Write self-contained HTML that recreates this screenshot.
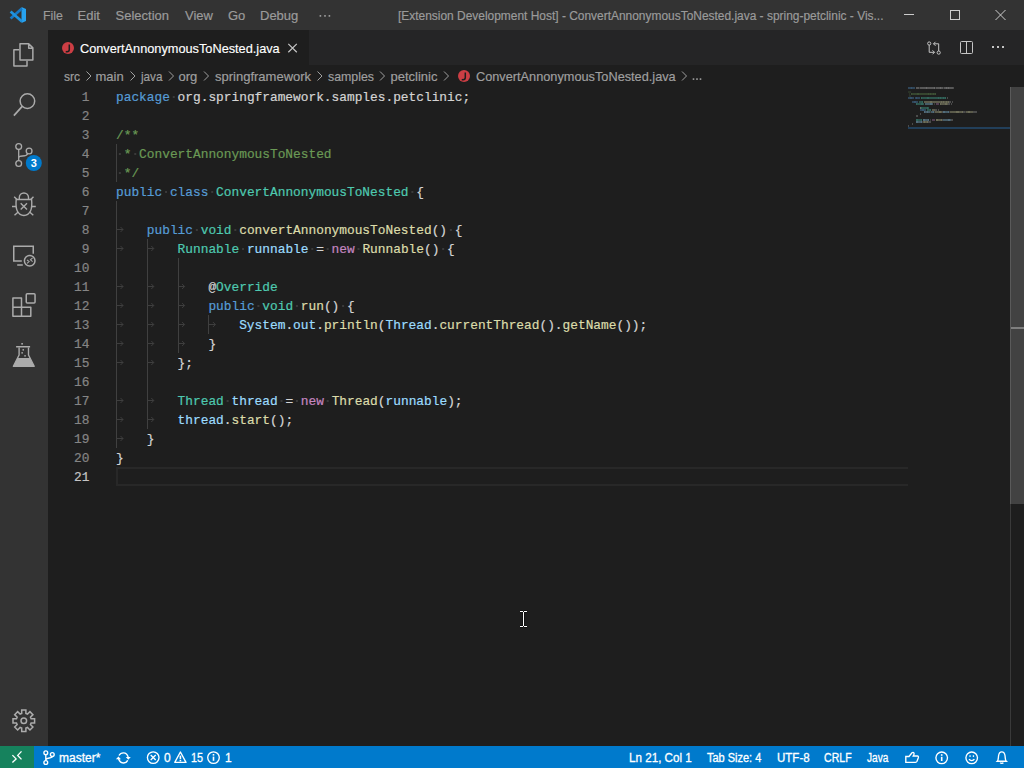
<!DOCTYPE html>
<html><head><meta charset="utf-8">
<style>
*{margin:0;padding:0;box-sizing:border-box}
html,body{width:1024px;height:768px;overflow:hidden;background:#1e1e1e;font-family:"Liberation Sans",sans-serif}
.abs{position:absolute}
#title{position:absolute;left:0;top:0;width:1024px;height:30px;background:#333333}
#act{position:absolute;left:0;top:30px;width:48px;height:716px;background:#333333}
#tabs{position:absolute;left:48px;top:30px;width:976px;height:35px;background:#252526}
#tab{position:absolute;left:48px;top:30px;width:261px;height:35px;background:#1e1e1e}
#status{position:absolute;left:0;top:746px;width:1024px;height:22px;background:#007acc}
#remote{position:absolute;left:0;top:746px;width:34px;height:22px;background:#16825d}
.t{position:absolute;white-space:pre;line-height:normal;-webkit-text-stroke:0.15px}
.menu{font-size:13px;color:#cccccc;opacity:.68;top:7.5px}
.ttl{font-size:12.5px;color:#cccccc;opacity:.68;top:8.5px;left:398px}
.bc{font-size:13px;color:#cccccc;opacity:.74;top:68.5px}
.sb{font-size:12px;color:#ffffff;top:751px;-webkit-text-stroke:0.3px}
.ln{position:absolute;left:116px;height:19px;white-space:pre;font-family:"Liberation Mono",monospace;font-size:12.83px;line-height:19px;padding-top:1px;-webkit-text-stroke:0.2px}
.num{position:absolute;left:59.5px;width:30px;text-align:right;height:19px;font-family:"Liberation Mono",monospace;font-size:12.83px;line-height:19px;padding-top:1px;color:#858585;-webkit-text-stroke:0.2px}
.num.act{color:#c6c6c6}
svg{position:absolute;left:0;top:0}
</style></head><body>
<div id="title"></div>
<div id="act"></div>
<div id="tabs"></div>
<div id="tab"></div>
<div id="status"></div>
<div id="remote"></div>

<!-- title bar text -->
<div class="t menu" style="left:42.5px;transform:scaleX(.95);transform-origin:0 0">File</div>
<div class="t menu" style="left:77.5px">Edit</div>
<div class="t menu" style="left:115.5px">Selection</div>
<div class="t menu" style="left:185px">View</div>
<div class="t menu" style="left:228px">Go</div>
<div class="t menu" style="left:260px">Debug</div>
<div class="t ttl" style="transform:scaleX(.955);transform-origin:0 0">[Extension Development Host] - ConvertAnnonymousToNested.java - spring-petclinic - Vis...</div>

<!-- tab -->
<div class="t" style="left:80px;top:41px;font-size:13px;color:#ffffff;transform:scaleX(.98);transform-origin:0 0">ConvertAnnonymousToNested.java</div>

<!-- breadcrumbs -->
<div class="t bc" style="left:64px;transform:scaleX(.93);transform-origin:0 0">src</div>
<div class="t bc" style="left:95.5px">main</div>
<div class="t bc" style="left:140.5px;transform:scaleX(.9);transform-origin:0 0">java</div>
<div class="t bc" style="left:178.5px">org</div>
<div class="t bc" style="left:215px">springframework</div>
<div class="t bc" style="left:328px;transform:scaleX(.95);transform-origin:0 0">samples</div>
<div class="t bc" style="left:390.5px">petclinic</div>
<div class="t bc" style="left:476px;transform:scaleX(.98);transform-origin:0 0">ConvertAnnonymousToNested.java</div>

<!-- editor -->
<div class="num" style="top:87px">1</div>
<div class="num" style="top:106px">2</div>
<div class="num" style="top:125px">3</div>
<div class="num" style="top:144px">4</div>
<div class="num" style="top:163px">5</div>
<div class="num" style="top:182px">6</div>
<div class="num" style="top:201px">7</div>
<div class="num" style="top:220px">8</div>
<div class="num" style="top:239px">9</div>
<div class="num" style="top:258px">10</div>
<div class="num" style="top:277px">11</div>
<div class="num" style="top:296px">12</div>
<div class="num" style="top:315px">13</div>
<div class="num" style="top:334px">14</div>
<div class="num" style="top:353px">15</div>
<div class="num" style="top:372px">16</div>
<div class="num" style="top:391px">17</div>
<div class="num" style="top:410px">18</div>
<div class="num" style="top:429px">19</div>
<div class="num" style="top:448px">20</div>
<div class="num act" style="top:467px">21</div>
<svg width="1024" height="768" style="pointer-events:none">
<path d="M908 468 H117 V485 H908" fill="none" stroke="#282828" stroke-width="2"/>
<g fill="#404040"><rect x="116" y="144" width="1" height="19"/><rect x="116" y="163" width="1" height="19"/><rect x="116" y="201" width="1" height="19"/><rect x="116" y="220" width="1" height="19"/><rect x="116" y="239" width="1" height="19"/><rect x="147" y="239" width="1" height="19"/><rect x="116" y="258" width="1" height="19"/><rect x="147" y="258" width="1" height="19"/><rect x="178" y="258" width="1" height="19"/><rect x="116" y="277" width="1" height="19"/><rect x="147" y="277" width="1" height="19"/><rect x="178" y="277" width="1" height="19"/><rect x="116" y="296" width="1" height="19"/><rect x="147" y="296" width="1" height="19"/><rect x="178" y="296" width="1" height="19"/><rect x="116" y="315" width="1" height="19"/><rect x="147" y="315" width="1" height="19"/><rect x="178" y="315" width="1" height="19"/><rect x="208" y="315" width="1" height="19"/><rect x="116" y="334" width="1" height="19"/><rect x="147" y="334" width="1" height="19"/><rect x="178" y="334" width="1" height="19"/><rect x="116" y="353" width="1" height="19"/><rect x="147" y="353" width="1" height="19"/><rect x="116" y="372" width="1" height="19"/><rect x="147" y="372" width="1" height="19"/><rect x="116" y="391" width="1" height="19"/><rect x="147" y="391" width="1" height="19"/><rect x="116" y="410" width="1" height="19"/><rect x="147" y="410" width="1" height="19"/><rect x="116" y="429" width="1" height="19"/></g>
<g fill="#3a3a3a"><rect x="172.73" y="96.00" width="2" height="2"/><rect x="118.85" y="153.00" width="2" height="2"/><rect x="134.25" y="153.00" width="2" height="2"/><rect x="118.85" y="172.00" width="2" height="2"/><rect x="165.04" y="191.00" width="2" height="2"/><rect x="211.22" y="191.00" width="2" height="2"/><rect x="411.37" y="191.00" width="2" height="2"/><rect x="195.83" y="229.00" width="2" height="2"/><rect x="234.32" y="229.00" width="2" height="2"/><rect x="449.86" y="229.00" width="2" height="2"/><rect x="242.02" y="248.00" width="2" height="2"/><rect x="311.30" y="248.00" width="2" height="2"/><rect x="326.69" y="248.00" width="2" height="2"/><rect x="357.49" y="248.00" width="2" height="2"/><rect x="442.17" y="248.00" width="2" height="2"/><rect x="257.41" y="305.00" width="2" height="2"/><rect x="295.90" y="305.00" width="2" height="2"/><rect x="342.09" y="305.00" width="2" height="2"/><rect x="226.62" y="400.00" width="2" height="2"/><rect x="280.51" y="400.00" width="2" height="2"/><rect x="295.90" y="400.00" width="2" height="2"/><rect x="326.69" y="400.00" width="2" height="2"/></g>
<g stroke="#3e3e3e" stroke-width="1" fill="none"><path d="M116.50 229.5H123.00M120.50 227L123.00 229.5L120.50 232"/><path d="M116.50 248.5H123.00M120.50 246L123.00 248.5L120.50 251"/><path d="M147.29 248.5H153.79M151.29 246L153.79 248.5L151.29 251"/><path d="M116.50 286.5H123.00M120.50 284L123.00 286.5L120.50 289"/><path d="M147.29 286.5H153.79M151.29 284L153.79 286.5L151.29 289"/><path d="M178.08 286.5H184.58M182.08 284L184.58 286.5L182.08 289"/><path d="M116.50 305.5H123.00M120.50 303L123.00 305.5L120.50 308"/><path d="M147.29 305.5H153.79M151.29 303L153.79 305.5L151.29 308"/><path d="M178.08 305.5H184.58M182.08 303L184.58 305.5L182.08 308"/><path d="M116.50 324.5H123.00M120.50 322L123.00 324.5L120.50 327"/><path d="M147.29 324.5H153.79M151.29 322L153.79 324.5L151.29 327"/><path d="M178.08 324.5H184.58M182.08 322L184.58 324.5L182.08 327"/><path d="M208.88 324.5H215.38M212.88 322L215.38 324.5L212.88 327"/><path d="M116.50 343.5H123.00M120.50 341L123.00 343.5L120.50 346"/><path d="M147.29 343.5H153.79M151.29 341L153.79 343.5L151.29 346"/><path d="M178.08 343.5H184.58M182.08 341L184.58 343.5L182.08 346"/><path d="M116.50 362.5H123.00M120.50 360L123.00 362.5L120.50 365"/><path d="M147.29 362.5H153.79M151.29 360L153.79 362.5L151.29 365"/><path d="M116.50 400.5H123.00M120.50 398L123.00 400.5L120.50 403"/><path d="M147.29 400.5H153.79M151.29 398L153.79 400.5L151.29 403"/><path d="M116.50 419.5H123.00M120.50 417L123.00 419.5L120.50 422"/><path d="M147.29 419.5H153.79M151.29 417L153.79 419.5L151.29 422"/><path d="M116.50 438.5H123.00M120.50 436L123.00 438.5L120.50 441"/></g>
</svg>
<div class="ln" style="top:87px"><span style="color:#569CD6">package</span> <span style="color:#D4D4D4">org.springframework.samples.petclinic;</span></div>
<div class="ln" style="top:106px"></div>
<div class="ln" style="top:125px"><span style="color:#6A9955">/**</span></div>
<div class="ln" style="top:144px"> <span style="color:#6A9955">*</span> <span style="color:#6A9955">ConvertAnnonymousToNested</span></div>
<div class="ln" style="top:163px"> <span style="color:#6A9955">*/</span></div>
<div class="ln" style="top:182px"><span style="color:#569CD6">public</span> <span style="color:#569CD6">class</span> <span style="color:#4EC9B0">ConvertAnnonymousToNested</span> <span style="color:#D4D4D4">{</span></div>
<div class="ln" style="top:201px"></div>
<div class="ln" style="top:220px">    <span style="color:#569CD6">public</span> <span style="color:#4EC9B0">void</span> <span style="color:#DCDCAA">convertAnnonymousToNested</span><span style="color:#D4D4D4">()</span> <span style="color:#D4D4D4">{</span></div>
<div class="ln" style="top:239px">        <span style="color:#4EC9B0">Runnable</span> <span style="color:#9CDCFE">runnable</span> <span style="color:#D4D4D4">=</span> <span style="color:#C586C0">new</span> <span style="color:#DCDCAA">Runnable</span><span style="color:#D4D4D4">()</span> <span style="color:#D4D4D4">{</span></div>
<div class="ln" style="top:258px"></div>
<div class="ln" style="top:277px">            <span style="color:#D4D4D4">@</span><span style="color:#4EC9B0">Override</span></div>
<div class="ln" style="top:296px">            <span style="color:#569CD6">public</span> <span style="color:#4EC9B0">void</span> <span style="color:#DCDCAA">run</span><span style="color:#D4D4D4">()</span> <span style="color:#D4D4D4">{</span></div>
<div class="ln" style="top:315px">                <span style="color:#9CDCFE">System</span><span style="color:#D4D4D4">.</span><span style="color:#9CDCFE">out</span><span style="color:#D4D4D4">.</span><span style="color:#DCDCAA">println</span><span style="color:#D4D4D4">(</span><span style="color:#9CDCFE">Thread</span><span style="color:#D4D4D4">.</span><span style="color:#DCDCAA">currentThread</span><span style="color:#D4D4D4">().</span><span style="color:#DCDCAA">getName</span><span style="color:#D4D4D4">());</span></div>
<div class="ln" style="top:334px">            <span style="color:#D4D4D4">}</span></div>
<div class="ln" style="top:353px">        <span style="color:#D4D4D4">};</span></div>
<div class="ln" style="top:372px"></div>
<div class="ln" style="top:391px">        <span style="color:#4EC9B0">Thread</span> <span style="color:#9CDCFE">thread</span> <span style="color:#D4D4D4">=</span> <span style="color:#C586C0">new</span> <span style="color:#DCDCAA">Thread</span><span style="color:#D4D4D4">(</span><span style="color:#9CDCFE">runnable</span><span style="color:#D4D4D4">);</span></div>
<div class="ln" style="top:410px">        <span style="color:#9CDCFE">thread</span><span style="color:#D4D4D4">.</span><span style="color:#DCDCAA">start</span><span style="color:#D4D4D4">();</span></div>
<div class="ln" style="top:429px">    <span style="color:#D4D4D4">}</span></div>
<div class="ln" style="top:448px"><span style="color:#D4D4D4">}</span></div>
<div class="ln" style="top:467px"></div>

<!-- minimap + scrollbar -->
<svg width="1024" height="768" style="pointer-events:none">
<g><rect x="908" y="87" width="1" height="2" fill="#569CD6" fill-opacity="0.32"/><rect x="909" y="87" width="1" height="2" fill="#569CD6" fill-opacity="0.32"/><rect x="910" y="87" width="1" height="2" fill="#569CD6" fill-opacity="0.32"/><rect x="911" y="87" width="1" height="2" fill="#569CD6" fill-opacity="0.42"/><rect x="912" y="87" width="1" height="2" fill="#569CD6" fill-opacity="0.32"/><rect x="913" y="87" width="1" height="2" fill="#569CD6" fill-opacity="0.32"/><rect x="914" y="87" width="1" height="2" fill="#569CD6" fill-opacity="0.32"/><rect x="916" y="87" width="1" height="2" fill="#D4D4D4" fill-opacity="0.32"/><rect x="917" y="87" width="1" height="2" fill="#D4D4D4" fill-opacity="0.32"/><rect x="918" y="87" width="1" height="2" fill="#D4D4D4" fill-opacity="0.32"/><rect x="919" y="87" width="1" height="2" fill="#D4D4D4" fill-opacity="0.16"/><rect x="920" y="87" width="1" height="2" fill="#D4D4D4" fill-opacity="0.32"/><rect x="921" y="87" width="1" height="2" fill="#D4D4D4" fill-opacity="0.32"/><rect x="922" y="87" width="1" height="2" fill="#D4D4D4" fill-opacity="0.32"/><rect x="923" y="87" width="1" height="2" fill="#D4D4D4" fill-opacity="0.32"/><rect x="924" y="87" width="1" height="2" fill="#D4D4D4" fill-opacity="0.32"/><rect x="925" y="87" width="1" height="2" fill="#D4D4D4" fill-opacity="0.32"/><rect x="926" y="87" width="1" height="2" fill="#D4D4D4" fill-opacity="0.42"/><rect x="927" y="87" width="1" height="2" fill="#D4D4D4" fill-opacity="0.32"/><rect x="928" y="87" width="1" height="2" fill="#D4D4D4" fill-opacity="0.32"/><rect x="929" y="87" width="1" height="2" fill="#D4D4D4" fill-opacity="0.32"/><rect x="930" y="87" width="1" height="2" fill="#D4D4D4" fill-opacity="0.32"/><rect x="931" y="87" width="1" height="2" fill="#D4D4D4" fill-opacity="0.32"/><rect x="932" y="87" width="1" height="2" fill="#D4D4D4" fill-opacity="0.32"/><rect x="933" y="87" width="1" height="2" fill="#D4D4D4" fill-opacity="0.32"/><rect x="934" y="87" width="1" height="2" fill="#D4D4D4" fill-opacity="0.42"/><rect x="935" y="87" width="1" height="2" fill="#D4D4D4" fill-opacity="0.16"/><rect x="936" y="87" width="1" height="2" fill="#D4D4D4" fill-opacity="0.32"/><rect x="937" y="87" width="1" height="2" fill="#D4D4D4" fill-opacity="0.32"/><rect x="938" y="87" width="1" height="2" fill="#D4D4D4" fill-opacity="0.32"/><rect x="939" y="87" width="1" height="2" fill="#D4D4D4" fill-opacity="0.32"/><rect x="940" y="87" width="1" height="2" fill="#D4D4D4" fill-opacity="0.42"/><rect x="941" y="87" width="1" height="2" fill="#D4D4D4" fill-opacity="0.32"/><rect x="942" y="87" width="1" height="2" fill="#D4D4D4" fill-opacity="0.32"/><rect x="943" y="87" width="1" height="2" fill="#D4D4D4" fill-opacity="0.16"/><rect x="944" y="87" width="1" height="2" fill="#D4D4D4" fill-opacity="0.32"/><rect x="945" y="87" width="1" height="2" fill="#D4D4D4" fill-opacity="0.32"/><rect x="946" y="87" width="1" height="2" fill="#D4D4D4" fill-opacity="0.42"/><rect x="947" y="87" width="1" height="2" fill="#D4D4D4" fill-opacity="0.32"/><rect x="948" y="87" width="1" height="2" fill="#D4D4D4" fill-opacity="0.42"/><rect x="949" y="87" width="1" height="2" fill="#D4D4D4" fill-opacity="0.32"/><rect x="950" y="87" width="1" height="2" fill="#D4D4D4" fill-opacity="0.32"/><rect x="951" y="87" width="1" height="2" fill="#D4D4D4" fill-opacity="0.32"/><rect x="952" y="87" width="1" height="2" fill="#D4D4D4" fill-opacity="0.32"/><rect x="953" y="87" width="1" height="2" fill="#D4D4D4" fill-opacity="0.25"/><rect x="908" y="91" width="1" height="2" fill="#6A9955" fill-opacity="0.16"/><rect x="909" y="91" width="1" height="2" fill="#6A9955" fill-opacity="0.16"/><rect x="910" y="91" width="1" height="2" fill="#6A9955" fill-opacity="0.16"/><rect x="909" y="93" width="1" height="2" fill="#6A9955" fill-opacity="0.16"/><rect x="911" y="93" width="1" height="2" fill="#6A9955" fill-opacity="0.42"/><rect x="912" y="93" width="1" height="2" fill="#6A9955" fill-opacity="0.32"/><rect x="913" y="93" width="1" height="2" fill="#6A9955" fill-opacity="0.32"/><rect x="914" y="93" width="1" height="2" fill="#6A9955" fill-opacity="0.32"/><rect x="915" y="93" width="1" height="2" fill="#6A9955" fill-opacity="0.32"/><rect x="916" y="93" width="1" height="2" fill="#6A9955" fill-opacity="0.32"/><rect x="917" y="93" width="1" height="2" fill="#6A9955" fill-opacity="0.42"/><rect x="918" y="93" width="1" height="2" fill="#6A9955" fill-opacity="0.42"/><rect x="919" y="93" width="1" height="2" fill="#6A9955" fill-opacity="0.32"/><rect x="920" y="93" width="1" height="2" fill="#6A9955" fill-opacity="0.32"/><rect x="921" y="93" width="1" height="2" fill="#6A9955" fill-opacity="0.32"/><rect x="922" y="93" width="1" height="2" fill="#6A9955" fill-opacity="0.32"/><rect x="923" y="93" width="1" height="2" fill="#6A9955" fill-opacity="0.32"/><rect x="924" y="93" width="1" height="2" fill="#6A9955" fill-opacity="0.32"/><rect x="925" y="93" width="1" height="2" fill="#6A9955" fill-opacity="0.32"/><rect x="926" y="93" width="1" height="2" fill="#6A9955" fill-opacity="0.32"/><rect x="927" y="93" width="1" height="2" fill="#6A9955" fill-opacity="0.32"/><rect x="928" y="93" width="1" height="2" fill="#6A9955" fill-opacity="0.42"/><rect x="929" y="93" width="1" height="2" fill="#6A9955" fill-opacity="0.32"/><rect x="930" y="93" width="1" height="2" fill="#6A9955" fill-opacity="0.42"/><rect x="931" y="93" width="1" height="2" fill="#6A9955" fill-opacity="0.32"/><rect x="932" y="93" width="1" height="2" fill="#6A9955" fill-opacity="0.32"/><rect x="933" y="93" width="1" height="2" fill="#6A9955" fill-opacity="0.42"/><rect x="934" y="93" width="1" height="2" fill="#6A9955" fill-opacity="0.32"/><rect x="935" y="93" width="1" height="2" fill="#6A9955" fill-opacity="0.42"/><rect x="909" y="95" width="1" height="2" fill="#6A9955" fill-opacity="0.16"/><rect x="910" y="95" width="1" height="2" fill="#6A9955" fill-opacity="0.16"/><rect x="908" y="97" width="1" height="2" fill="#569CD6" fill-opacity="0.32"/><rect x="909" y="97" width="1" height="2" fill="#569CD6" fill-opacity="0.32"/><rect x="910" y="97" width="1" height="2" fill="#569CD6" fill-opacity="0.42"/><rect x="911" y="97" width="1" height="2" fill="#569CD6" fill-opacity="0.42"/><rect x="912" y="97" width="1" height="2" fill="#569CD6" fill-opacity="0.32"/><rect x="913" y="97" width="1" height="2" fill="#569CD6" fill-opacity="0.32"/><rect x="915" y="97" width="1" height="2" fill="#569CD6" fill-opacity="0.32"/><rect x="916" y="97" width="1" height="2" fill="#569CD6" fill-opacity="0.42"/><rect x="917" y="97" width="1" height="2" fill="#569CD6" fill-opacity="0.32"/><rect x="918" y="97" width="1" height="2" fill="#569CD6" fill-opacity="0.32"/><rect x="919" y="97" width="1" height="2" fill="#569CD6" fill-opacity="0.32"/><rect x="921" y="97" width="1" height="2" fill="#4EC9B0" fill-opacity="0.42"/><rect x="922" y="97" width="1" height="2" fill="#4EC9B0" fill-opacity="0.32"/><rect x="923" y="97" width="1" height="2" fill="#4EC9B0" fill-opacity="0.32"/><rect x="924" y="97" width="1" height="2" fill="#4EC9B0" fill-opacity="0.32"/><rect x="925" y="97" width="1" height="2" fill="#4EC9B0" fill-opacity="0.32"/><rect x="926" y="97" width="1" height="2" fill="#4EC9B0" fill-opacity="0.32"/><rect x="927" y="97" width="1" height="2" fill="#4EC9B0" fill-opacity="0.42"/><rect x="928" y="97" width="1" height="2" fill="#4EC9B0" fill-opacity="0.42"/><rect x="929" y="97" width="1" height="2" fill="#4EC9B0" fill-opacity="0.32"/><rect x="930" y="97" width="1" height="2" fill="#4EC9B0" fill-opacity="0.32"/><rect x="931" y="97" width="1" height="2" fill="#4EC9B0" fill-opacity="0.32"/><rect x="932" y="97" width="1" height="2" fill="#4EC9B0" fill-opacity="0.32"/><rect x="933" y="97" width="1" height="2" fill="#4EC9B0" fill-opacity="0.32"/><rect x="934" y="97" width="1" height="2" fill="#4EC9B0" fill-opacity="0.32"/><rect x="935" y="97" width="1" height="2" fill="#4EC9B0" fill-opacity="0.32"/><rect x="936" y="97" width="1" height="2" fill="#4EC9B0" fill-opacity="0.32"/><rect x="937" y="97" width="1" height="2" fill="#4EC9B0" fill-opacity="0.32"/><rect x="938" y="97" width="1" height="2" fill="#4EC9B0" fill-opacity="0.42"/><rect x="939" y="97" width="1" height="2" fill="#4EC9B0" fill-opacity="0.32"/><rect x="940" y="97" width="1" height="2" fill="#4EC9B0" fill-opacity="0.42"/><rect x="941" y="97" width="1" height="2" fill="#4EC9B0" fill-opacity="0.32"/><rect x="942" y="97" width="1" height="2" fill="#4EC9B0" fill-opacity="0.32"/><rect x="943" y="97" width="1" height="2" fill="#4EC9B0" fill-opacity="0.42"/><rect x="944" y="97" width="1" height="2" fill="#4EC9B0" fill-opacity="0.32"/><rect x="945" y="97" width="1" height="2" fill="#4EC9B0" fill-opacity="0.42"/><rect x="947" y="97" width="1" height="2" fill="#D4D4D4" fill-opacity="0.25"/><rect x="912" y="101" width="1" height="2" fill="#569CD6" fill-opacity="0.32"/><rect x="913" y="101" width="1" height="2" fill="#569CD6" fill-opacity="0.32"/><rect x="914" y="101" width="1" height="2" fill="#569CD6" fill-opacity="0.42"/><rect x="915" y="101" width="1" height="2" fill="#569CD6" fill-opacity="0.42"/><rect x="916" y="101" width="1" height="2" fill="#569CD6" fill-opacity="0.32"/><rect x="917" y="101" width="1" height="2" fill="#569CD6" fill-opacity="0.32"/><rect x="919" y="101" width="1" height="2" fill="#4EC9B0" fill-opacity="0.32"/><rect x="920" y="101" width="1" height="2" fill="#4EC9B0" fill-opacity="0.32"/><rect x="921" y="101" width="1" height="2" fill="#4EC9B0" fill-opacity="0.32"/><rect x="922" y="101" width="1" height="2" fill="#4EC9B0" fill-opacity="0.42"/><rect x="924" y="101" width="1" height="2" fill="#DCDCAA" fill-opacity="0.32"/><rect x="925" y="101" width="1" height="2" fill="#DCDCAA" fill-opacity="0.32"/><rect x="926" y="101" width="1" height="2" fill="#DCDCAA" fill-opacity="0.32"/><rect x="927" y="101" width="1" height="2" fill="#DCDCAA" fill-opacity="0.32"/><rect x="928" y="101" width="1" height="2" fill="#DCDCAA" fill-opacity="0.32"/><rect x="929" y="101" width="1" height="2" fill="#DCDCAA" fill-opacity="0.32"/><rect x="930" y="101" width="1" height="2" fill="#DCDCAA" fill-opacity="0.42"/><rect x="931" y="101" width="1" height="2" fill="#DCDCAA" fill-opacity="0.42"/><rect x="932" y="101" width="1" height="2" fill="#DCDCAA" fill-opacity="0.32"/><rect x="933" y="101" width="1" height="2" fill="#DCDCAA" fill-opacity="0.32"/><rect x="934" y="101" width="1" height="2" fill="#DCDCAA" fill-opacity="0.32"/><rect x="935" y="101" width="1" height="2" fill="#DCDCAA" fill-opacity="0.32"/><rect x="936" y="101" width="1" height="2" fill="#DCDCAA" fill-opacity="0.32"/><rect x="937" y="101" width="1" height="2" fill="#DCDCAA" fill-opacity="0.32"/><rect x="938" y="101" width="1" height="2" fill="#DCDCAA" fill-opacity="0.32"/><rect x="939" y="101" width="1" height="2" fill="#DCDCAA" fill-opacity="0.32"/><rect x="940" y="101" width="1" height="2" fill="#DCDCAA" fill-opacity="0.32"/><rect x="941" y="101" width="1" height="2" fill="#DCDCAA" fill-opacity="0.42"/><rect x="942" y="101" width="1" height="2" fill="#DCDCAA" fill-opacity="0.32"/><rect x="943" y="101" width="1" height="2" fill="#DCDCAA" fill-opacity="0.42"/><rect x="944" y="101" width="1" height="2" fill="#DCDCAA" fill-opacity="0.32"/><rect x="945" y="101" width="1" height="2" fill="#DCDCAA" fill-opacity="0.32"/><rect x="946" y="101" width="1" height="2" fill="#DCDCAA" fill-opacity="0.42"/><rect x="947" y="101" width="1" height="2" fill="#DCDCAA" fill-opacity="0.32"/><rect x="948" y="101" width="1" height="2" fill="#DCDCAA" fill-opacity="0.42"/><rect x="949" y="101" width="1" height="2" fill="#D4D4D4" fill-opacity="0.25"/><rect x="950" y="101" width="1" height="2" fill="#D4D4D4" fill-opacity="0.25"/><rect x="952" y="101" width="1" height="2" fill="#D4D4D4" fill-opacity="0.25"/><rect x="916" y="103" width="1" height="2" fill="#4EC9B0" fill-opacity="0.42"/><rect x="917" y="103" width="1" height="2" fill="#4EC9B0" fill-opacity="0.32"/><rect x="918" y="103" width="1" height="2" fill="#4EC9B0" fill-opacity="0.32"/><rect x="919" y="103" width="1" height="2" fill="#4EC9B0" fill-opacity="0.32"/><rect x="920" y="103" width="1" height="2" fill="#4EC9B0" fill-opacity="0.32"/><rect x="921" y="103" width="1" height="2" fill="#4EC9B0" fill-opacity="0.42"/><rect x="922" y="103" width="1" height="2" fill="#4EC9B0" fill-opacity="0.42"/><rect x="923" y="103" width="1" height="2" fill="#4EC9B0" fill-opacity="0.32"/><rect x="925" y="103" width="1" height="2" fill="#9CDCFE" fill-opacity="0.32"/><rect x="926" y="103" width="1" height="2" fill="#9CDCFE" fill-opacity="0.32"/><rect x="927" y="103" width="1" height="2" fill="#9CDCFE" fill-opacity="0.32"/><rect x="928" y="103" width="1" height="2" fill="#9CDCFE" fill-opacity="0.32"/><rect x="929" y="103" width="1" height="2" fill="#9CDCFE" fill-opacity="0.32"/><rect x="930" y="103" width="1" height="2" fill="#9CDCFE" fill-opacity="0.42"/><rect x="931" y="103" width="1" height="2" fill="#9CDCFE" fill-opacity="0.42"/><rect x="932" y="103" width="1" height="2" fill="#9CDCFE" fill-opacity="0.32"/><rect x="934" y="103" width="1" height="2" fill="#D4D4D4" fill-opacity="0.16"/><rect x="936" y="103" width="1" height="2" fill="#C586C0" fill-opacity="0.32"/><rect x="937" y="103" width="1" height="2" fill="#C586C0" fill-opacity="0.32"/><rect x="938" y="103" width="1" height="2" fill="#C586C0" fill-opacity="0.32"/><rect x="940" y="103" width="1" height="2" fill="#DCDCAA" fill-opacity="0.42"/><rect x="941" y="103" width="1" height="2" fill="#DCDCAA" fill-opacity="0.32"/><rect x="942" y="103" width="1" height="2" fill="#DCDCAA" fill-opacity="0.32"/><rect x="943" y="103" width="1" height="2" fill="#DCDCAA" fill-opacity="0.32"/><rect x="944" y="103" width="1" height="2" fill="#DCDCAA" fill-opacity="0.32"/><rect x="945" y="103" width="1" height="2" fill="#DCDCAA" fill-opacity="0.42"/><rect x="946" y="103" width="1" height="2" fill="#DCDCAA" fill-opacity="0.42"/><rect x="947" y="103" width="1" height="2" fill="#DCDCAA" fill-opacity="0.32"/><rect x="948" y="103" width="1" height="2" fill="#D4D4D4" fill-opacity="0.25"/><rect x="949" y="103" width="1" height="2" fill="#D4D4D4" fill-opacity="0.25"/><rect x="951" y="103" width="1" height="2" fill="#D4D4D4" fill-opacity="0.25"/><rect x="920" y="107" width="1" height="2" fill="#D4D4D4" fill-opacity="0.42"/><rect x="921" y="107" width="1" height="2" fill="#4EC9B0" fill-opacity="0.42"/><rect x="922" y="107" width="1" height="2" fill="#4EC9B0" fill-opacity="0.32"/><rect x="923" y="107" width="1" height="2" fill="#4EC9B0" fill-opacity="0.32"/><rect x="924" y="107" width="1" height="2" fill="#4EC9B0" fill-opacity="0.32"/><rect x="925" y="107" width="1" height="2" fill="#4EC9B0" fill-opacity="0.32"/><rect x="926" y="107" width="1" height="2" fill="#4EC9B0" fill-opacity="0.32"/><rect x="927" y="107" width="1" height="2" fill="#4EC9B0" fill-opacity="0.42"/><rect x="928" y="107" width="1" height="2" fill="#4EC9B0" fill-opacity="0.32"/><rect x="920" y="109" width="1" height="2" fill="#569CD6" fill-opacity="0.32"/><rect x="921" y="109" width="1" height="2" fill="#569CD6" fill-opacity="0.32"/><rect x="922" y="109" width="1" height="2" fill="#569CD6" fill-opacity="0.42"/><rect x="923" y="109" width="1" height="2" fill="#569CD6" fill-opacity="0.42"/><rect x="924" y="109" width="1" height="2" fill="#569CD6" fill-opacity="0.32"/><rect x="925" y="109" width="1" height="2" fill="#569CD6" fill-opacity="0.32"/><rect x="927" y="109" width="1" height="2" fill="#4EC9B0" fill-opacity="0.32"/><rect x="928" y="109" width="1" height="2" fill="#4EC9B0" fill-opacity="0.32"/><rect x="929" y="109" width="1" height="2" fill="#4EC9B0" fill-opacity="0.32"/><rect x="930" y="109" width="1" height="2" fill="#4EC9B0" fill-opacity="0.42"/><rect x="932" y="109" width="1" height="2" fill="#DCDCAA" fill-opacity="0.32"/><rect x="933" y="109" width="1" height="2" fill="#DCDCAA" fill-opacity="0.32"/><rect x="934" y="109" width="1" height="2" fill="#DCDCAA" fill-opacity="0.32"/><rect x="935" y="109" width="1" height="2" fill="#D4D4D4" fill-opacity="0.25"/><rect x="936" y="109" width="1" height="2" fill="#D4D4D4" fill-opacity="0.25"/><rect x="938" y="109" width="1" height="2" fill="#D4D4D4" fill-opacity="0.25"/><rect x="924" y="111" width="1" height="2" fill="#9CDCFE" fill-opacity="0.42"/><rect x="925" y="111" width="1" height="2" fill="#9CDCFE" fill-opacity="0.32"/><rect x="926" y="111" width="1" height="2" fill="#9CDCFE" fill-opacity="0.32"/><rect x="927" y="111" width="1" height="2" fill="#9CDCFE" fill-opacity="0.42"/><rect x="928" y="111" width="1" height="2" fill="#9CDCFE" fill-opacity="0.32"/><rect x="929" y="111" width="1" height="2" fill="#9CDCFE" fill-opacity="0.32"/><rect x="930" y="111" width="1" height="2" fill="#D4D4D4" fill-opacity="0.16"/><rect x="931" y="111" width="1" height="2" fill="#9CDCFE" fill-opacity="0.32"/><rect x="932" y="111" width="1" height="2" fill="#9CDCFE" fill-opacity="0.32"/><rect x="933" y="111" width="1" height="2" fill="#9CDCFE" fill-opacity="0.42"/><rect x="934" y="111" width="1" height="2" fill="#D4D4D4" fill-opacity="0.16"/><rect x="935" y="111" width="1" height="2" fill="#DCDCAA" fill-opacity="0.32"/><rect x="936" y="111" width="1" height="2" fill="#DCDCAA" fill-opacity="0.32"/><rect x="937" y="111" width="1" height="2" fill="#DCDCAA" fill-opacity="0.32"/><rect x="938" y="111" width="1" height="2" fill="#DCDCAA" fill-opacity="0.32"/><rect x="939" y="111" width="1" height="2" fill="#DCDCAA" fill-opacity="0.42"/><rect x="940" y="111" width="1" height="2" fill="#DCDCAA" fill-opacity="0.42"/><rect x="941" y="111" width="1" height="2" fill="#DCDCAA" fill-opacity="0.32"/><rect x="942" y="111" width="1" height="2" fill="#D4D4D4" fill-opacity="0.25"/><rect x="943" y="111" width="1" height="2" fill="#9CDCFE" fill-opacity="0.42"/><rect x="944" y="111" width="1" height="2" fill="#9CDCFE" fill-opacity="0.42"/><rect x="945" y="111" width="1" height="2" fill="#9CDCFE" fill-opacity="0.32"/><rect x="946" y="111" width="1" height="2" fill="#9CDCFE" fill-opacity="0.32"/><rect x="947" y="111" width="1" height="2" fill="#9CDCFE" fill-opacity="0.32"/><rect x="948" y="111" width="1" height="2" fill="#9CDCFE" fill-opacity="0.42"/><rect x="949" y="111" width="1" height="2" fill="#D4D4D4" fill-opacity="0.16"/><rect x="950" y="111" width="1" height="2" fill="#DCDCAA" fill-opacity="0.32"/><rect x="951" y="111" width="1" height="2" fill="#DCDCAA" fill-opacity="0.32"/><rect x="952" y="111" width="1" height="2" fill="#DCDCAA" fill-opacity="0.32"/><rect x="953" y="111" width="1" height="2" fill="#DCDCAA" fill-opacity="0.32"/><rect x="954" y="111" width="1" height="2" fill="#DCDCAA" fill-opacity="0.32"/><rect x="955" y="111" width="1" height="2" fill="#DCDCAA" fill-opacity="0.32"/><rect x="956" y="111" width="1" height="2" fill="#DCDCAA" fill-opacity="0.42"/><rect x="957" y="111" width="1" height="2" fill="#DCDCAA" fill-opacity="0.42"/><rect x="958" y="111" width="1" height="2" fill="#DCDCAA" fill-opacity="0.42"/><rect x="959" y="111" width="1" height="2" fill="#DCDCAA" fill-opacity="0.32"/><rect x="960" y="111" width="1" height="2" fill="#DCDCAA" fill-opacity="0.32"/><rect x="961" y="111" width="1" height="2" fill="#DCDCAA" fill-opacity="0.32"/><rect x="962" y="111" width="1" height="2" fill="#DCDCAA" fill-opacity="0.42"/><rect x="963" y="111" width="1" height="2" fill="#D4D4D4" fill-opacity="0.25"/><rect x="964" y="111" width="1" height="2" fill="#D4D4D4" fill-opacity="0.25"/><rect x="965" y="111" width="1" height="2" fill="#D4D4D4" fill-opacity="0.16"/><rect x="966" y="111" width="1" height="2" fill="#DCDCAA" fill-opacity="0.32"/><rect x="967" y="111" width="1" height="2" fill="#DCDCAA" fill-opacity="0.32"/><rect x="968" y="111" width="1" height="2" fill="#DCDCAA" fill-opacity="0.42"/><rect x="969" y="111" width="1" height="2" fill="#DCDCAA" fill-opacity="0.42"/><rect x="970" y="111" width="1" height="2" fill="#DCDCAA" fill-opacity="0.32"/><rect x="971" y="111" width="1" height="2" fill="#DCDCAA" fill-opacity="0.32"/><rect x="972" y="111" width="1" height="2" fill="#DCDCAA" fill-opacity="0.32"/><rect x="973" y="111" width="1" height="2" fill="#D4D4D4" fill-opacity="0.25"/><rect x="974" y="111" width="1" height="2" fill="#D4D4D4" fill-opacity="0.25"/><rect x="975" y="111" width="1" height="2" fill="#D4D4D4" fill-opacity="0.25"/><rect x="976" y="111" width="1" height="2" fill="#D4D4D4" fill-opacity="0.25"/><rect x="920" y="113" width="1" height="2" fill="#D4D4D4" fill-opacity="0.25"/><rect x="916" y="115" width="1" height="2" fill="#D4D4D4" fill-opacity="0.25"/><rect x="917" y="115" width="1" height="2" fill="#D4D4D4" fill-opacity="0.25"/><rect x="916" y="119" width="1" height="2" fill="#4EC9B0" fill-opacity="0.42"/><rect x="917" y="119" width="1" height="2" fill="#4EC9B0" fill-opacity="0.42"/><rect x="918" y="119" width="1" height="2" fill="#4EC9B0" fill-opacity="0.32"/><rect x="919" y="119" width="1" height="2" fill="#4EC9B0" fill-opacity="0.32"/><rect x="920" y="119" width="1" height="2" fill="#4EC9B0" fill-opacity="0.32"/><rect x="921" y="119" width="1" height="2" fill="#4EC9B0" fill-opacity="0.42"/><rect x="923" y="119" width="1" height="2" fill="#9CDCFE" fill-opacity="0.42"/><rect x="924" y="119" width="1" height="2" fill="#9CDCFE" fill-opacity="0.42"/><rect x="925" y="119" width="1" height="2" fill="#9CDCFE" fill-opacity="0.32"/><rect x="926" y="119" width="1" height="2" fill="#9CDCFE" fill-opacity="0.32"/><rect x="927" y="119" width="1" height="2" fill="#9CDCFE" fill-opacity="0.32"/><rect x="928" y="119" width="1" height="2" fill="#9CDCFE" fill-opacity="0.42"/><rect x="930" y="119" width="1" height="2" fill="#D4D4D4" fill-opacity="0.16"/><rect x="932" y="119" width="1" height="2" fill="#C586C0" fill-opacity="0.32"/><rect x="933" y="119" width="1" height="2" fill="#C586C0" fill-opacity="0.32"/><rect x="934" y="119" width="1" height="2" fill="#C586C0" fill-opacity="0.32"/><rect x="936" y="119" width="1" height="2" fill="#DCDCAA" fill-opacity="0.42"/><rect x="937" y="119" width="1" height="2" fill="#DCDCAA" fill-opacity="0.42"/><rect x="938" y="119" width="1" height="2" fill="#DCDCAA" fill-opacity="0.32"/><rect x="939" y="119" width="1" height="2" fill="#DCDCAA" fill-opacity="0.32"/><rect x="940" y="119" width="1" height="2" fill="#DCDCAA" fill-opacity="0.32"/><rect x="941" y="119" width="1" height="2" fill="#DCDCAA" fill-opacity="0.42"/><rect x="942" y="119" width="1" height="2" fill="#D4D4D4" fill-opacity="0.25"/><rect x="943" y="119" width="1" height="2" fill="#9CDCFE" fill-opacity="0.32"/><rect x="944" y="119" width="1" height="2" fill="#9CDCFE" fill-opacity="0.32"/><rect x="945" y="119" width="1" height="2" fill="#9CDCFE" fill-opacity="0.32"/><rect x="946" y="119" width="1" height="2" fill="#9CDCFE" fill-opacity="0.32"/><rect x="947" y="119" width="1" height="2" fill="#9CDCFE" fill-opacity="0.32"/><rect x="948" y="119" width="1" height="2" fill="#9CDCFE" fill-opacity="0.42"/><rect x="949" y="119" width="1" height="2" fill="#9CDCFE" fill-opacity="0.42"/><rect x="950" y="119" width="1" height="2" fill="#9CDCFE" fill-opacity="0.32"/><rect x="951" y="119" width="1" height="2" fill="#D4D4D4" fill-opacity="0.25"/><rect x="952" y="119" width="1" height="2" fill="#D4D4D4" fill-opacity="0.25"/><rect x="916" y="121" width="1" height="2" fill="#9CDCFE" fill-opacity="0.42"/><rect x="917" y="121" width="1" height="2" fill="#9CDCFE" fill-opacity="0.42"/><rect x="918" y="121" width="1" height="2" fill="#9CDCFE" fill-opacity="0.32"/><rect x="919" y="121" width="1" height="2" fill="#9CDCFE" fill-opacity="0.32"/><rect x="920" y="121" width="1" height="2" fill="#9CDCFE" fill-opacity="0.32"/><rect x="921" y="121" width="1" height="2" fill="#9CDCFE" fill-opacity="0.42"/><rect x="922" y="121" width="1" height="2" fill="#D4D4D4" fill-opacity="0.16"/><rect x="923" y="121" width="1" height="2" fill="#DCDCAA" fill-opacity="0.32"/><rect x="924" y="121" width="1" height="2" fill="#DCDCAA" fill-opacity="0.42"/><rect x="925" y="121" width="1" height="2" fill="#DCDCAA" fill-opacity="0.32"/><rect x="926" y="121" width="1" height="2" fill="#DCDCAA" fill-opacity="0.32"/><rect x="927" y="121" width="1" height="2" fill="#DCDCAA" fill-opacity="0.42"/><rect x="928" y="121" width="1" height="2" fill="#D4D4D4" fill-opacity="0.25"/><rect x="929" y="121" width="1" height="2" fill="#D4D4D4" fill-opacity="0.25"/><rect x="930" y="121" width="1" height="2" fill="#D4D4D4" fill-opacity="0.25"/><rect x="912" y="123" width="1" height="2" fill="#D4D4D4" fill-opacity="0.25"/><rect x="908" y="125" width="1" height="2" fill="#D4D4D4" fill-opacity="0.25"/></g>
<rect x="908" y="127" width="102" height="2" fill="#223f5a"/>
<rect x="1010" y="87" width="1" height="659" fill="#3a3a3a"/>
<rect x="1011" y="87" width="13" height="417" fill="#424242"/>
<rect x="1010" y="87" width="1" height="417" fill="#5a5a5a"/>
<rect x="1011" y="327" width="13" height="2" fill="#7f7f7f"/>
</svg>

<!-- status text -->
<div class="t sb" style="left:59px">master*</div>
<div class="t sb" style="left:164px">0</div>
<div class="t sb" style="left:191px;transform:scaleX(.9);transform-origin:0 0">15</div>
<div class="t sb" style="left:225px">1</div>
<div class="t sb" style="left:628.5px;transform:scaleX(.97);transform-origin:0 0">Ln 21, Col 1</div>
<div class="t sb" style="left:706.5px;transform:scaleX(.915);transform-origin:0 0">Tab Size: 4</div>
<div class="t sb" style="left:776.5px;transform:scaleX(.96);transform-origin:0 0">UTF-8</div>
<div class="t sb" style="left:824px;transform:scaleX(.88);transform-origin:0 0">CRLF</div>
<div class="t sb" style="left:866.5px;transform:scaleX(.84);transform-origin:0 0">Java</div>

<!-- icons overlay -->
<svg width="1024" height="768" style="pointer-events:none">
<!-- vscode logo -->
<g>
<path d="M21.5 7 L26 9.1 V20.9 L21.5 23 Z" fill="#27a2ef"/>
<path d="M10.6 18.6 L21.9 8.4" stroke="#1679c6" stroke-width="2.7" fill="none"/>
<path d="M10.6 11.4 L21.9 21.6" stroke="#1f93e0" stroke-width="2.7" fill="none"/>
</g>
<!-- window controls -->
<g stroke="#cccccc" stroke-width="1" fill="none">
<path d="M904 14.5 H914"/>
<rect x="950.5" y="10.5" width="9" height="9"/>
<path d="M995.5 10 L1005.5 20 M1005.5 10 L995.5 20"/>
</g>
<!-- menu ellipsis -->
<g fill="#a3a3a3"><rect x="319.6" y="15.1" width="1.6" height="1.6"/><rect x="324.2" y="15.1" width="1.6" height="1.6"/><rect x="328.6" y="15.1" width="1.6" height="1.6"/></g>
<!-- activity bar icons -->
<g stroke="#ababab" stroke-width="1.5" fill="none" stroke-linejoin="round">
<path d="M20 43.75 H28.7 L32.85 47.9 V60 H20 Z M28.7 43.75 V48.3 H32.85"/>
<path d="M19.25 49.75 H13.9 V66 H27 V60.75"/>
<circle cx="27.4" cy="101.1" r="7.3"/>
<path d="M22.2 106.4 L13.9 115.6" stroke-width="1.7"/>
</g>
<g stroke="#ababab" stroke-width="1.3" fill="none">
<circle cx="18.7" cy="146.6" r="2.9"/>
<circle cx="29.1" cy="151" r="2.9"/>
<circle cx="18.7" cy="163.5" r="2.9"/>
<path d="M18.7 149.5 V160.6 M18.7 158 C18.7 156 20 156 22.5 156 C25.5 156 27 155 27.7 153.7"/>
</g>
<circle cx="33.8" cy="163" r="8" fill="#007acc"/>
<text x="33.8" y="167.2" fill="#ffffff" font-family="Liberation Sans" font-weight="bold" font-size="11" text-anchor="middle">3</text>
<g stroke="#ababab" stroke-width="1.4" fill="none">
<path d="M16.2 199.5 H31.6 C32 204 32 208 30.5 211 C29 214 26.5 215.5 23.9 215.5 C21.3 215.5 18.8 214 17.3 211 C15.8 208 15.8 204 16.2 199.5 Z"/>
<path d="M19.3 199.5 V197.5 C19.3 195 21.3 193 23.9 193 C26.5 193 28.5 195 28.5 197.5 V199.5"/>
<path d="M14.2 196.7 L17 199.6 M12 206.5 H16 M14.5 215.3 L18.2 212 M33.5 196.7 L30.7 199.6 M35.8 206.5 H31.8 M33.3 215.3 L29.6 212"/>
<path d="M20.7 203.2 L27 209.5 M27 203.2 L20.7 209.5"/>
</g>
<g stroke="#ababab" stroke-width="1.5" fill="none">
<path d="M21.8 261 H13.75 V246.25 H33.25 V253.8"/>
<path d="M17.2 265 H22.8"/>
<circle cx="29.7" cy="260.7" r="5.3"/>
<path d="M27 259.8 L29.1 261.6 L27 263.4 M32.6 257.9 L30.5 259.8 L32.6 261.7" stroke-width="1.1"/>
</g>
<g stroke="#ababab" stroke-width="1.5" fill="none" stroke-linejoin="round">
<rect x="26.25" y="293.75" width="8.8" height="9.2" rx="1"/>
<path d="M12.9 297.9 H21.5 V307.2 H30.8 V316.3 H12.9 Z M12.9 307.2 H21.5 V316.3"/>
</g>
<g fill="#ababab">
<rect x="21.3" y="343" width="1.6" height="1.6"/>
<rect x="16.1" y="346" width="14" height="1.5"/>
<path d="M19.1 347.5 V355 L13.4 366.3 H34.2 L28.5 355 V347.5" stroke="#ababab" stroke-width="1.4" fill="none" stroke-linejoin="round"/>
<path d="M17.6 358 H30 L34.2 366.3 H13.4 Z"/>
<rect x="22.5" y="349.1" width="1.5" height="1.5"/>
<rect x="21.4" y="352.1" width="1.5" height="1.5"/>
<rect x="24.3" y="355.1" width="1.5" height="1.5"/>
</g>
<g stroke="#ababab" stroke-width="1.5" fill="none">
<path d="M21.71 713.49 L21.70 710.00 L25.90 710.00 L25.89 713.49 L27.48 714.15 L29.95 711.68 L32.92 714.65 L30.45 717.12 L31.11 718.71 L34.60 718.70 L34.60 722.90 L31.11 722.89 L30.45 724.48 L32.92 726.95 L29.95 729.92 L27.48 727.45 L25.89 728.11 L25.90 731.60 L21.70 731.60 L21.71 728.11 L20.12 727.45 L17.65 729.92 L14.68 726.95 L17.15 724.48 L16.49 722.89 L13.00 722.90 L13.00 718.70 L16.49 718.71 L17.15 717.12 L14.68 714.65 L17.65 711.68 L20.12 714.15 Z"/>
<circle cx="23.8" cy="720.8" r="2.8"/>
</g>
<!-- tab icons -->
<circle cx="68" cy="48" r="6" fill="#cc3e44"/>
<path d="M69.3 44.6 V49.6 C69.3 51.2 68.4 51.8 67.2 51.8 C66.6 51.8 66.1 51.6 65.8 51.4" stroke="#1e1e1e" stroke-width="1.5" fill="none"/>
<path d="M288.3 43.9 L296.8 52.3 M296.8 43.9 L288.3 52.3" stroke="#c5c5c5" stroke-width="1.2" fill="none"/>
<g stroke="#c5c5c5" stroke-width="1" fill="none">
<circle cx="929.2" cy="43.5" r="1.6"/>
<circle cx="938.7" cy="52.6" r="1.6"/>
<path d="M929.2 45.1 V52.3 H934.5 M932.5 50.3 L934.5 52.3 L932.5 54.3 M938.7 51 V43.8 H933.5 M935.5 41.8 L933.5 43.8 L935.5 45.8"/>
<rect x="960.5" y="41.5" width="12" height="12" rx="1"/>
<path d="M966.5 41.5 V53.5"/>
</g>
<g fill="#c5c5c5"><rect x="992" y="46" width="2" height="2"/><rect x="997" y="46" width="2" height="2"/><rect x="1002" y="46" width="2" height="2"/></g>
<!-- breadcrumb chevrons -->
<g stroke="#a0a0a0" stroke-width="1" fill="none">
<path d="M86.5 71.5 L91 76 L86.5 80.5"/>
<path d="M130.5 71.5 L135 76 L130.5 80.5"/>
<path d="M169 71.5 L173.5 76 L169 80.5"/>
<path d="M204 71.5 L208.5 76 L204 80.5"/>
<path d="M317.5 71.5 L322 76 L317.5 80.5"/>
<path d="M380 71.5 L384.5 76 L380 80.5"/>
<path d="M444 71.5 L448.5 76 L444 80.5"/>
<path d="M682 71.5 L686.5 76 L682 80.5"/>
</g>
<circle cx="464" cy="76" r="6" fill="#cc3e44"/>
<path d="M465.3 72.6 V77.6 C465.3 79.2 464.4 79.8 463.2 79.8 C462.6 79.8 462.1 79.6 461.8 79.4" stroke="#1e1e1e" stroke-width="1.5" fill="none"/>
<g fill="#a0a0a0"><rect x="692.7" y="78.3" width="1.6" height="1.6"/><rect x="696.2" y="78.3" width="1.6" height="1.6"/><rect x="699.7" y="78.3" width="1.6" height="1.6"/></g>
<!-- status bar icons -->
<g stroke="#ffffff" stroke-width="1.35" fill="none">
<path d="M12.4 755.1 L16.1 758.9 L12.4 762.6 M21.5 751.4 L17.7 755.4 L21.5 759.4"/>
<circle cx="45.8" cy="752.7" r="1.9"/>
<circle cx="52.3" cy="754.6" r="1.9"/>
<circle cx="45.8" cy="762.5" r="1.9"/>
<path d="M45.8 754.6 V760.6 M45.8 760 C45.8 757.5 52.3 758.5 52.3 756.5"/>
<path d="M119 755.5 C120 753.6 121.5 752.9 123.5 752.9 C125.6 752.9 127.4 754.2 128.2 757.2 M127.7 760.2 C126.8 762 125.3 763 123.5 763 C121.4 763 119.4 761.6 118.6 758.8"/>
<circle cx="153.2" cy="757.6" r="5.8"/>
<path d="M150.7 755.1 L155.7 760.1 M155.7 755.1 L150.7 760.1"/>
<path d="M180.4 752 L174.8 762.4 H186 Z" stroke-linejoin="round"/>
<circle cx="213.5" cy="757.6" r="5.8"/>
<circle cx="941.7" cy="757.8" r="5.8"/>
<circle cx="971.7" cy="757.8" r="5.8"/>
<path d="M969 759.2 C970.3 761 973.1 761 974.4 759.2"/>
<path d="M997.3 761.2 C998.6 760 998.2 758 998.6 755.5 C999 752.8 1000.5 751.8 1001.8 751.8 C1003.1 751.8 1004.6 752.8 1005 755.5 C1005.4 758 1005 760 1006.3 761.2 Z M1000.3 762.6 C1000.8 763.6 1002.8 763.6 1003.3 762.6"/>
<path d="M905.8 756.5 H909 L912 752.8 C913 752 914.5 752.5 914 754.2 L913.2 756 H917.5 C918.3 756 918.6 756.8 918.4 757.5 L917 761.3 C916.7 762 916.2 762.3 915.5 762.3 H905.8 Z"/>
</g>
<g fill="#ffffff">
<path d="M115.9 759.2 H121 L118.45 756.4 Z M125.8 756.9 H130.8 L128.3 759.8 Z"/>
<rect x="179.6" y="755.6" width="1.6" height="3.6"/><rect x="179.6" y="759.9" width="1.6" height="1.5"/>
<rect x="212.7" y="756.6" width="1.6" height="4.2"/><rect x="212.7" y="754" width="1.6" height="1.6"/>
<rect x="940.9" y="756.8" width="1.6" height="4.2"/><rect x="940.9" y="754.2" width="1.6" height="1.6"/>
<rect x="969.4" y="755.3" width="1.3" height="1.6"/><rect x="972.8" y="755.3" width="1.3" height="1.6"/>
</g>
<!-- mouse ibeam -->
<g>
<path d="M520 611.5 H523 M524 611.5 H527 M523.5 612 V626 M520 626.5 H523 M524 626.5 H527" stroke="#000000" stroke-width="3" fill="none" opacity="0.4"/>
<path d="M520 611.5 H523 M524 611.5 H527 M523.5 612 V626 M520 626.5 H523 M524 626.5 H527" stroke="#ffffff" stroke-width="1" fill="none"/>
</g>
</svg>
</body></html>
